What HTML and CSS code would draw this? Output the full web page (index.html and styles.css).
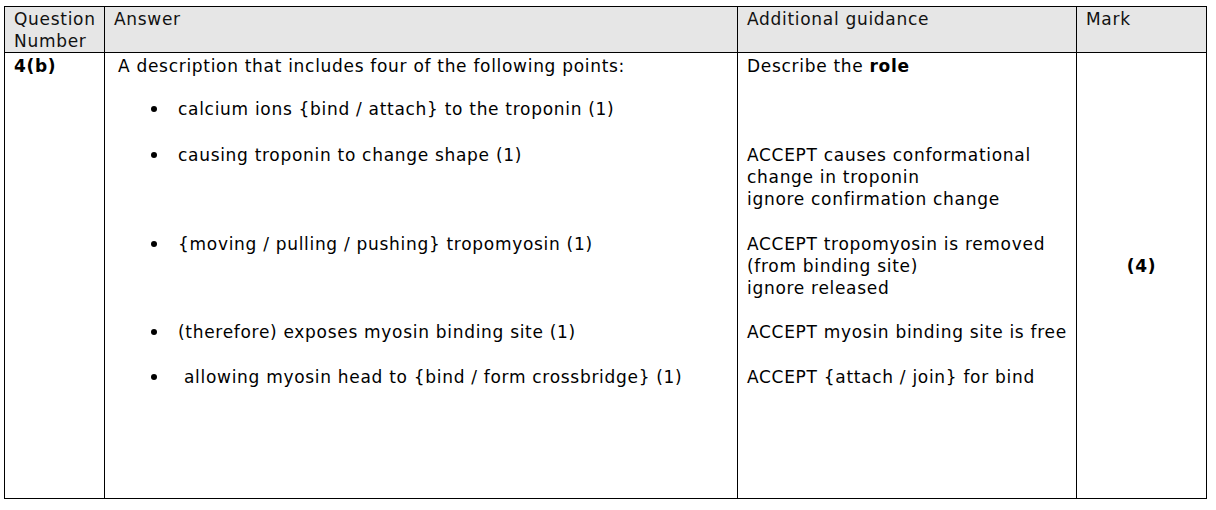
FILE: index.html
```html
<!DOCTYPE html>
<html lang="en">
<head>
<meta charset="utf-8">
<title>Mark scheme 4(b)</title>
<link rel="stylesheet" href="styles.css">
</head>
<body>
<table class="scheme">
  <colgroup>
    <col class="c-num">
    <col class="c-ans">
    <col class="c-guide">
    <col class="c-mark">
  </colgroup>
  <thead>
    <tr class="head">
      <th>Question Number</th>
      <th class="pl-ans">Answer</th>
      <th>Additional guidance</th>
      <th>Mark</th>
    </tr>
  </thead>
  <tbody>
    <tr class="body">
      <td class="num">4(b)</td>
      <td class="ans">
        <p class="intro">A description that includes four of the following points:</p>
        <ul class="points">
          <li class="p1"><span class="dot"></span><span>calcium ions {bind / attach} to the troponin (1)</span></li>
          <li class="p2"><span class="dot"></span><span>causing troponin to change shape (1)</span></li>
          <li class="p3"><span class="dot"></span><span>{moving / pulling / pushing} tropomyosin (1)</span></li>
          <li class="p4"><span class="dot"></span><span>(therefore) exposes myosin binding site (1)</span></li>
          <li class="p5"><span class="dot"></span><span class="extra">allowing myosin head to {bind / form crossbridge} (1)</span></li>
        </ul>
      </td>
      <td class="guide">
        <p class="g0">Describe the <b>role</b></p>
        <p class="g1">ACCEPT causes conformational<br>change in troponin<br>ignore confirmation change</p>
        <p class="g2">ACCEPT tropomyosin is removed<br>(from binding site)<br>ignore released</p>
        <p class="g3">ACCEPT myosin binding site is free</p>
        <p class="g4">ACCEPT {attach / join} for bind</p>
      </td>
      <td class="mark"><b>(4)</b></td>
    </tr>
  </tbody>
</table>
</body>
</html>
```

FILE: styles.css
```css
* { box-sizing: border-box; }

body {
  margin: 0;
  padding: 6px 0 0 4px;
  background: #fff;
  font-family: "DejaVu Sans", Verdana, sans-serif;
  font-size: 17px;
  letter-spacing: 0.7px;
  line-height: 22px;
  color: #000;
}

.scheme {
  border-collapse: collapse;
  table-layout: fixed;
  width: 1202px;
}

.c-num { width: 100px; }
.c-ans { width: 633px; }
.c-guide { width: 339px; }
.c-mark { width: 130px; }

.scheme th,
.scheme td {
  border: 1px solid #000;
  padding: 0;
  vertical-align: top;
  text-align: left;
}

.head th {
  height: 45px;
  background: #e6e6e6;
  font-weight: normal;
  color: #111;
  padding: 1px 2px 0 9px;
}

.body td { height: 446px; }

.num {
  font-weight: bold;
  padding: 2px 0 0 9px !important;
}

.ans { padding: 2px 8px 0 13px !important; }

.intro { margin: 0; }

.points {
  list-style: none;
  margin: 0;
  padding: 0 0 0 33px;
}

.points li {
  display: flex;
  align-items: center;
}

.dot {
  flex: none;
  width: 6px;
  height: 6px;
  border-radius: 50%;
  background: #000;
  margin-right: 21px;
}

.extra { padding-left: 6px; }

.p1 { margin-top: 21px; }
.p2 { margin-top: 24px; }
.p3 { margin-top: 67px; }
.p4 { margin-top: 66px; }
.p5 { margin-top: 23px; }

.guide { padding: 2px 4px 0 9px !important; }
.guide p { margin: 0; }
.g1 { margin-top: 67px !important; }
.g2 { margin-top: 23px !important; }
.g3 { margin-top: 22px !important; }
.g4 { margin-top: 23px !important; }

.mark {
  vertical-align: middle !important;
  text-align: center !important;
  padding-bottom: 19px !important;
}
```
